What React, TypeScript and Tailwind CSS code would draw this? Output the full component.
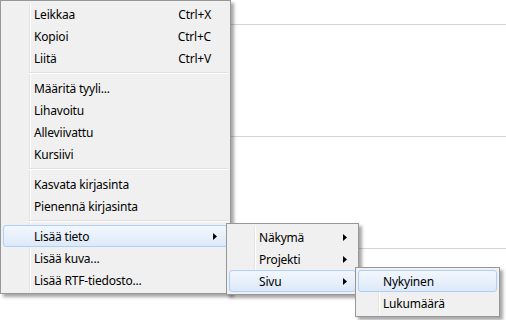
import React from "react";

interface MenuItem {
  label: string;
  shortcut?: string;
  sub?: boolean;
  active?: boolean;
  sep?: boolean;
}

const mainItems: MenuItem[] = [
  { label: "Leikkaa", shortcut: "Ctrl+X" },
  { label: "Kopioi", shortcut: "Ctrl+C" },
  { label: "Liitä", shortcut: "Ctrl+V" },
  { label: "", sep: true },
  { label: "Määritä tyyli..." },
  { label: "Lihavoitu" },
  { label: "Alleviivattu" },
  { label: "Kursiivi" },
  { label: "", sep: true },
  { label: "Kasvata kirjasinta" },
  { label: "Pienennä kirjasinta" },
  { label: "", sep: true },
  { label: "Lisää tieto", sub: true, active: true },
  { label: "Lisää kuva..." },
  { label: "Lisää RTF-tiedosto..." },
];

const infoItems: MenuItem[] = [
  { label: "Näkymä", sub: true },
  { label: "Projekti", sub: true },
  { label: "Sivu", sub: true, active: true },
];

const pageItems: MenuItem[] = [
  { label: "Nykyinen", active: true },
  { label: "Lukumäärä" },
];

const Arrow = () => (
  <svg width="4" height="7" viewBox="0 0 4 7" className="ml-auto">
    <path d="M0 0 L4 3.5 L0 7 Z" fill="#000" />
  </svg>
);

const Menu: React.FC<{
  items: MenuItem[];
  className: string;
  gutter: number;
  arrowPad: string;
}> = ({ items, className, gutter, arrowPad }) => (
  <div
    className={`absolute border border-[#979797] bg-[#f0f0f0] p-[2px] shadow-[3px_3px_3px_rgba(0,0,0,0.35)] ${className}`}
  >
    <div
      className="absolute top-[2px] bottom-[2px] w-[2px] border-l border-r border-l-[#e2e3e3] border-r-white"
      style={{ left: gutter }}
    />
    {items.map((item, i) =>
      item.sep ? (
        <div key={i} className="relative h-[8px] flex items-center" style={{ paddingLeft: gutter - 2 }}>
          <div className="w-full border-t border-b border-t-[#e0e0e0] border-b-white" />
        </div>
      ) : (
        <div
          key={i}
          className={`relative flex h-[22px] items-center rounded-[3px] border pt-[1px] ${
            item.active
              ? "border-[#aecff7] bg-gradient-to-b from-[#f2f7fe] to-[#dde9f9]"
              : "border-transparent"
          } ${arrowPad}`}
          style={{ paddingLeft: gutter + 2 }}
        >
          <span>{item.label}</span>
          {item.shortcut && <span className="ml-auto mr-[6px]">{item.shortcut}</span>}
          {item.sub && <Arrow />}
        </div>
      )
    )}
  </div>
);

const App: React.FC = () => {
  return (
    <div
      className="relative h-[320px] w-[506px] overflow-hidden bg-white text-[12px] tracking-[-0.2px] text-black"
      style={{ fontFamily: '"Segoe UI", "Noto Sans", sans-serif' }}
    >
      <div className="flex flex-col">
        <div className="h-[25px] border-b border-[#d4d4d4]" />
        <div className="h-[112px] border-b border-[#d4d4d4]" />
        <div className="h-[112px] border-b border-[#d4d4d4]" />
      </div>

      <Menu
        items={mainItems}
        className="left-0 top-0 w-[231px]"
        gutter={28}
        arrowPad="pr-[10px]"
      />
      <Menu
        items={infoItems}
        className="left-[226px] top-[223px] w-[133px]"
        gutter={27}
        arrowPad="pr-[8px]"
      />
      <Menu
        items={pageItems}
        className="left-[355px] top-[267px] w-[145px]"
        gutter={22}
        arrowPad="pr-[8px]"
      />
    </div>
  );
};

export default App;
